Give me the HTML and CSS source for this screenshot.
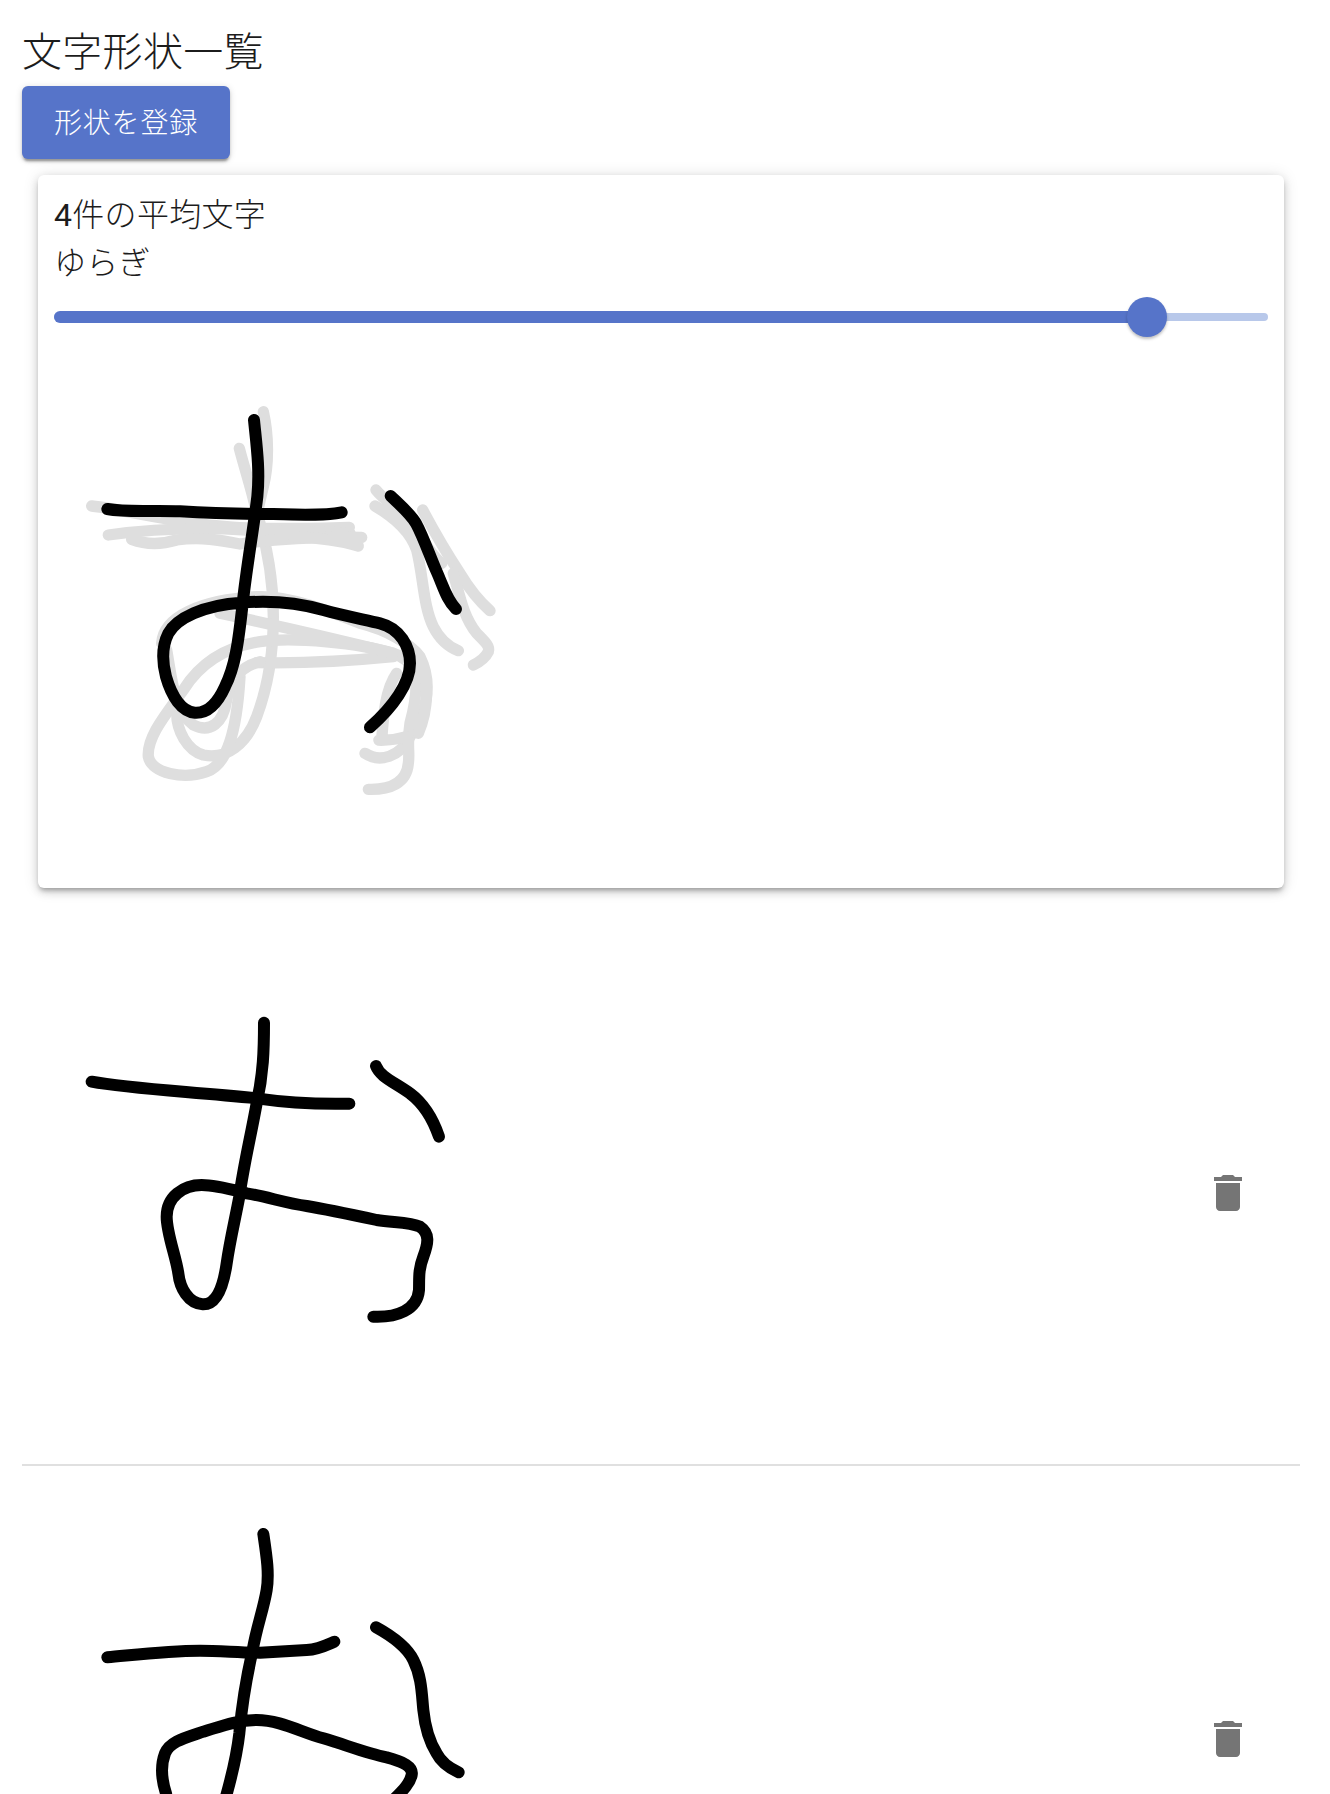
FILE: index.html
```html
<!DOCTYPE html>
<html lang="ja">
<head>
<meta charset="utf-8">
<title>文字形状一覧</title>
<link rel="stylesheet" href="styles.css">
</head>
<body>
<div class="page">
  <div class="appbar-shadow"></div>
  <main class="content">
    <h1 class="title">文字形状一覧</h1>
    <button class="primary-btn" type="button">形状を登録</button>
    <section class="card">
      <div class="card-text"><span class="num">4</span>件の平均文字</div>
      <div class="card-text">ゆらぎ</div>
      <div class="slider">
        <div class="slider-rail">
          <div class="slider-track" style="width:90%"></div>
        </div>
        <div class="slider-thumb" style="left:90%"></div>
      </div>
      <svg class="card-canvas" viewBox="-18 -129 1500 1572" aria-hidden="true">
        <g class="ghost">
          <path d="M610 65C625 130 628 220 610 290C598 340 590 370 586 410"/>
          <path d="M538 175C555 240 575 300 588 360C620 460 640 560 640 680C640 800 620 900 590 980C560 1060 500 1110 430 1095C380 1080 350 1020 350 970"/>
          <path d="M95 348C200 360 350 400 500 410C600 420 750 415 868 412"/>
          <path d="M145 435C250 420 400 410 560 420C700 425 800 425 870 430"/>
          <path d="M215 448C260 465 300 465 350 450C420 440 480 450 540 462C620 450 750 440 905 442"/>
          <path d="M700 440C800 445 850 455 895 468"/>
          <path d="M305 760C310 680 420 630 590 620C680 615 800 660 900 700C980 720 1050 760 1080 800C1120 880 1100 980 1050 1040C1020 1100 960 1120 915 1090"/>
          <path d="M480 670C620 700 800 740 1000 790C1060 810 1090 850 1050 1000C1040 1060 1050 1090 1045 1120C1040 1180 990 1200 925 1198"/>
          <path d="M590 818C700 820 850 815 1000 800"/>
          <path d="M1000 790C900 760 700 740 600 755C500 770 420 820 370 900C320 970 260 1040 265 1100C275 1150 370 1170 440 1145C500 1125 530 1030 540 860"/>
          <path d="M320 780C335 860 340 960 400 1005C450 1030 490 1000 500 930C510 870 540 830 600 815"/>
          <path d="M1010 850C975 900 970 980 965 1050C935 1050 990 1055 1040 1040"/>
          <path d="M1075 800C1110 870 1105 960 1075 1030"/>
          <path d="M948 300C980 340 1040 370 1070 420C1100 470 1130 510 1145 520"/>
          <path d="M945 348C1000 380 1050 420 1070 480C1090 560 1090 650 1120 710C1140 750 1165 770 1195 782"/>
          <path d="M1088 360C1120 420 1160 490 1200 550C1230 600 1265 640 1290 662"/>
          <path d="M1180 550C1200 620 1210 680 1250 730C1280 760 1290 770 1285 785C1275 805 1260 815 1240 825"/>
        </g>
        <g class="ink">
          <path d="M582 90C590 170 600 240 592 320C580 420 560 530 548 640C535 760 525 830 495 890C470 945 440 970 405 968C365 965 335 920 318 860C305 810 305 770 325 730C350 685 430 645 545 638C640 630 720 640 790 660C850 677 920 690 960 700C1020 715 1050 770 1050 820C1050 880 1000 950 930 1012"/>
          <path d="M142 357C200 368 280 360 360 364C450 370 560 372 640 372C720 374 790 378 845 367"/>
          <path d="M992 318C1020 345 1050 370 1068 400C1090 440 1110 500 1130 545C1150 590 1160 630 1188 657"/>
        </g>
      </svg>
    </section>
    <ul class="shape-list">
      <li class="shape-row">
        <svg class="row-canvas" viewBox="-114 -234 1500 1626" aria-hidden="true">
          <g class="ink">
            <path d="M612 68C612 150 610 220 590 310C570 420 550 500 538 590C525 660 510 720 500 790C490 860 470 915 428 913C385 910 360 865 355 820C348 770 320 700 320 650C320 590 370 555 425 555C470 555 520 570 560 580C620 590 680 610 740 618C800 628 880 645 950 660C1000 668 1050 665 1080 680C1110 700 1105 730 1090 770C1075 810 1078 830 1077 870C1072 930 1010 953 940 950"/>
            <path d="M95 245C200 265 350 272 590 295C680 308 780 313 868 311"/>
            <path d="M948 198C960 230 1000 245 1050 280C1090 310 1120 360 1137 410"/>
          </g>
        </svg>
        <button class="icon-btn" type="button" aria-label="削除">
          <svg viewBox="0 0 24 24"><path d="M6 19c0 1.1.9 2 2 2h8c1.1 0 2-.9 2-2V7H6v12zM19 4h-3.5l-1-1h-5l-1 1H5v2h14V4z"/></svg>
        </button>
      </li>
      <li class="shape-row">
        <svg class="row-canvas" viewBox="-114 -96 1500 1626" aria-hidden="true">
          <g class="ink">
            <path d="M610 102C620 170 628 220 620 270C610 330 590 380 578 450C560 530 545 620 538 700C530 770 515 830 495 900C470 980 440 1040 400 1040C350 1040 330 950 318 880C305 840 300 800 315 760C330 725 370 715 430 695C480 680 530 660 590 660C660 660 720 695 790 715C850 732 920 760 980 772C1030 785 1060 800 1055 825C1050 850 1030 870 1000 900"/>
            <path d="M142 472C220 465 320 452 420 452C480 452 540 458 600 458C660 455 700 452 740 450C775 448 800 435 823 425"/>
            <path d="M948 382C990 405 1040 440 1060 480C1085 530 1085 580 1090 630C1095 680 1105 720 1130 760C1145 790 1170 805 1196 817"/>
          </g>
        </svg>
        <button class="icon-btn" type="button" aria-label="削除">
          <svg viewBox="0 0 24 24"><path d="M6 19c0 1.1.9 2 2 2h8c1.1 0 2-.9 2-2V7H6v12zM19 4h-3.5l-1-1h-5l-1 1H5v2h14V4z"/></svg>
        </button>
      </li>
    </ul>
  </main>
</div>
</body>
</html>
```
FILE: styles.css
```css
* { box-sizing: border-box; }
html, body { margin: 0; padding: 0; background: #fff; }
body { font-family: Roboto, "Noto Sans CJK JP", sans-serif; color: #1c1c1c; }
.page { height: 1794px; overflow: hidden; }
.appbar-shadow { height: 0; box-shadow: 0 1px 5px rgba(0,0,0,.16); }
.content { padding: 23px 30px 0 22px; }
.title { margin: 0 0 3px; font-size: 40px; line-height: 60px; font-weight: 300; letter-spacing: .3px; }
.primary-btn {
  display: block; width: 208px; height: 73px; padding: 2px 0 0; border: 0; border-radius: 6px;
  background: #5674c9; color: #fff; font: inherit; font-size: 28px; font-weight: 300; letter-spacing: .8px; line-height: 1;
  box-shadow: 0 4px 2px -2px rgba(0,0,0,.24), 0 3px 3px rgba(0,0,0,.16), 0 1px 7px rgba(0,0,0,.14);
}
.card {
  margin: 16px 16px 0; padding: 16px; height: 713px; background: #fff; border-radius: 6px;
  box-shadow: 0 4px 4px -2px rgba(0,0,0,.24), 0 4px 8px 0 rgba(0,0,0,.16), 0 1px 16px 0 rgba(0,0,0,.12);
}
.card-text { font-size: 32px; line-height: 48px; font-weight: 300; letter-spacing: .3px; }
.num { font-weight: 400; }
.slider { position: relative; height: 60px; display: flex; align-items: center; }
.slider-rail { position: relative; flex: 1; height: 8px; border-radius: 4px; background: #b8c8ea; }
.slider-track { position: absolute; left: 0; top: -2px; height: 12px; border-radius: 6px; background: #5674c9; }
.slider-thumb {
  position: absolute; top: 10px; width: 40px; height: 40px; margin-left: -20px; border-radius: 50%;
  background: #5674c9; box-shadow: 0 2px 3px rgba(0,0,0,.25);
}
.card-canvas { display: block; width: 500px; height: 524px; }
.ghost, .ink { fill: none; stroke-linecap: round; stroke-linejoin: round; }
.ghost { stroke: #dedede; stroke-width: 34; }
.ink { stroke: #000; stroke-width: 36; }
.shape-list { list-style: none; margin: 32px 0 0; padding: 0; }
.shape-row {
  display: flex; align-items: center; justify-content: space-between; height: 546px;
  padding: 2px 48px 0 0; border-bottom: 2px solid #e0e0e0;
}
.row-canvas { display: block; width: 500px; height: 542px; flex: none; }
.icon-btn { width: 48px; height: 48px; padding: 0; border: 0; background: none; }
.icon-btn svg { display: block; width: 48px; height: 48px; fill: #757575; }
```
